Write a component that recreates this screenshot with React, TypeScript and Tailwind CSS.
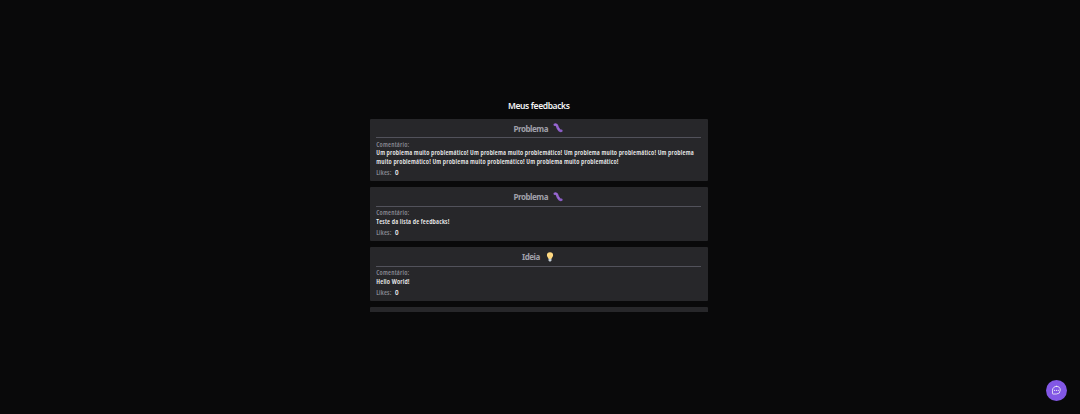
import React from "react";

type Kind = "problem" | "idea";
interface Feedback {
  kind: Kind;
  comment: string[];
  likes: number;
}

const feedbacks: Feedback[] = [
  {
    kind: "problem",
    comment: [
      "Um problema muito problemático! Um problema muito problemático! Um problema muito problemático! Um problema",
      "muito problemático! Um problema muito problemático! Um problema muito problemático!",
    ],
    likes: 0,
  },
  { kind: "problem", comment: ["Teste da lista de feedbacks!"], likes: 0 },
  { kind: "idea", comment: ["Hello World!"], likes: 0 },
];

function Caterpillar() {
  return (
    <svg viewBox="0 0 10 10" className="h-[10px] w-[10px]" fill="none" strokeLinecap="round" strokeLinejoin="round">
      <path d="M1.8 1.7C3 1.4 3.9 1.9 4.2 3.2C4.5 4.6 4.9 5.3 5.6 6.2C6.3 7.6 7 8.1 8.3 7.8" stroke="#8a5dc4" strokeWidth="2.7" />
      <path d="M1.8 1.6C3.2 1.3 3.9 2 4.2 3.3M5 5.1L6 6.6" stroke="#9b6bd3" strokeWidth="1.3" />
    </svg>
  );
}

function Bulb() {
  return (
    <svg viewBox="0 0 10 10" className="h-[10px] w-[10px]">
      <path d="M5 .2A3.1 3.1 0 0 0 1.9 3.3C1.9 5 3.3 5.4 3.6 7H6.4C6.7 5.4 8.1 5 8.1 3.3A3.1 3.1 0 0 0 5 .2Z" fill="#ffd983" />
      <path d="M5 3.5V6.5" stroke="#ffcc4d" strokeWidth=".5" />
      <path d="M3.6 6.7H6.4V8.6L5.6 9.6H4.4L3.6 8.6Z" fill="#ccd6dd" />
      <path d="M3.6 7.8H6.4" stroke="#99aab5" strokeWidth=".4" />
    </svg>
  );
}

function Card({ item }: { item: Feedback }) {
  const problem = item.kind === "problem";
  return (
    <article className="flex shrink-0 flex-col rounded-[1px] bg-[#27272a] px-[6.75px] pb-[3px]">
      <header className="flex h-[19.25px] items-center justify-center border-b border-[#52525b] pr-px text-[#a1a1aa]">
        <h2 className={problem ? "w-[39.5px] pt-px text-[8px] font-bold tracking-[-0.46px] whitespace-nowrap" : "w-[22.5px] pt-px text-[8px] font-bold tracking-[-0.46px] whitespace-nowrap"}>
          {problem ? "Problema" : "Ideia"}
        </h2>
        {problem ? <Caterpillar /> : <Bulb />}
      </header>
      <span className="mt-[2.5px] font-['Open_Sans','Noto_Sans',sans-serif] text-[6.8px] leading-[8.5px] font-semibold tracking-[0.22px] text-[#8c8c95] font-stretch-[87.5%]">Comentário:</span>
      {item.comment.map((line) => (
        <p key={line} className="font-['Open_Sans','Noto_Sans',sans-serif] text-[6.8px] leading-[8.5px] font-semibold tracking-[0.205px] whitespace-nowrap text-[#f4f4f5] font-stretch-[87.5%]">{line}</p>
      ))}
      <div className="mt-[3.2px] flex gap-[3.5px] text-[6.2px] leading-[8.5px]">
        <span className="font-['Open_Sans','Noto_Sans',sans-serif] text-[6.8px] font-semibold tracking-[0.2px] text-[#8c8c95] font-stretch-[87.5%]">Likes:</span>
        <span className="font-semibold text-[#f4f4f5]">{item.likes}</span>
      </div>
    </article>
  );
}

export default function App() {
  return (
    <div className="relative flex h-[414px] flex-col items-center overflow-hidden bg-[#09090a] font-['Noto_Sans','Open_Sans',sans-serif]">
      <main className="mt-[99px] mr-[2.5px] flex w-[338.5px] flex-col">
        <h1 className="h-5 text-center text-[8.5px] leading-[14px] font-semibold tracking-[-0.38px] text-[#f4f4f5]">Meus feedbacks</h1>
        <section className="flex h-[193px] flex-col gap-[6.5px] overflow-hidden">
          {feedbacks.map((item, index) => <Card key={index} item={item} />)}
          <div className="h-12 shrink-0 rounded-[1px] bg-[#27272a]" />
        </section>
      </main>
      <button aria-label="Feedback" className="absolute right-[13.5px] bottom-[13.5px] flex h-[21px] w-[21px] items-center justify-center rounded-full bg-[#8257e5]">
        <svg viewBox="0 0 256 256" className="h-[10.5px] w-[10.5px]" fill="none" stroke="#f4f4f5" strokeWidth="20" strokeLinecap="round" strokeLinejoin="round">
          <path d="M132 32A96 96 0 0 0 36 128V208A12 12 0 0 0 48 220H132A94 94 0 0 0 132 32Z" />
          <g fill="#f4f4f5" stroke="none"><circle cx="86" cy="130" r="15" /><circle cx="132" cy="130" r="15" /><circle cx="178" cy="130" r="15" /></g>
        </svg>
      </button>
    </div>
  );
}
